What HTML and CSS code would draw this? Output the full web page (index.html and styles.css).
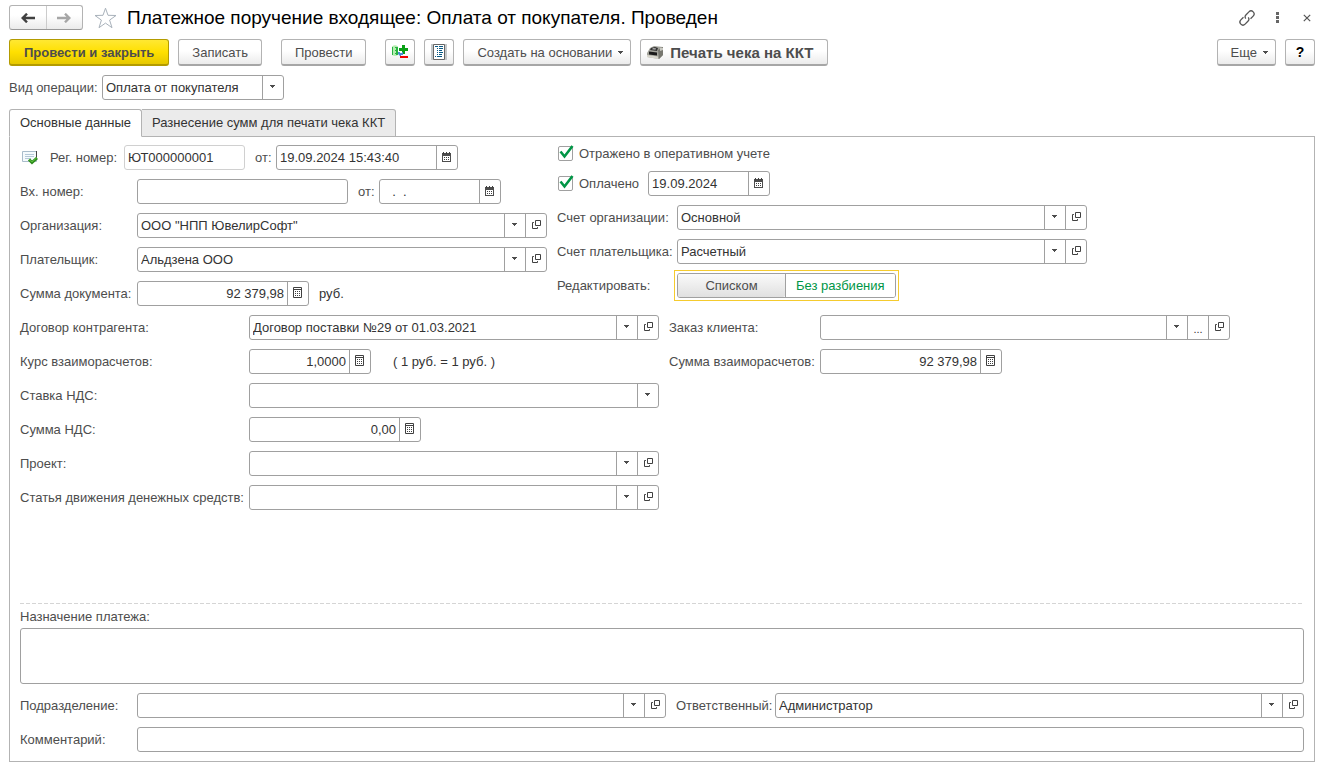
FILE: index.html
```
<!DOCTYPE html>
<html lang="ru">
<head>
<meta charset="utf-8">
<title>Платежное поручение входящее</title>
<link rel="stylesheet" href="styles.css">
</head>
<body>
<svg class="sprite" aria-hidden="true">
  <symbol id="caret" viewBox="0 0 7 4"><path d="M1 0h5v1H1zM2 1h3v1H2zM3 2h1v1H3z" fill="#4d4d4d"/></symbol>
  <symbol id="open" viewBox="0 0 9 9"><path d="M3.500.500h5v5h-5zM1.900 2.500H.500v6h5V7.100" fill="none" stroke="#404040"/></symbol>
  <symbol id="calendar" viewBox="0 0 9 10"><path d="M0 1h9v9H0z" fill="#4d4d4d"/><path d="M1 4h7v5H1z" fill="#fff"/><path d="M1 0h1v2H1zM4 0h1v2H4zM7 0h1v2H7z" fill="#404040"/><path d="M2 5h1v1H2zM4 5h1v1H4zM6 5h1v1H6zM2 7h1v1H2zM4 7h1v1H4zM6 7h1v1H6z" fill="#404040"/></symbol>
  <symbol id="calc" viewBox="0 0 9 11"><path d="M.500.500h8v10h-8zM0 2.500h9" fill="none" stroke="#404040"/><path d="M2 4h1v1H2zM4 4h1v1H4zM6 4h1v1H6zM2 6h1v1H2zM4 6h1v1H4zM6 6h1v1H6zM2 8h1v1H2zM4 8h1v1H4zM6 8h1v1H6z" fill="#404040"/></symbol>
  <symbol id="tick" viewBox="0 0 18 17"><path d="M2.500 6.500l4 5L14.500 1" fill="none" stroke="#009646" stroke-width="2.600"/></symbol>
</svg>

<div class="page">
  <header class="header">
    <div class="history">
      <button type="button" aria-label="Назад"><svg width="14" height="10" viewBox="0 0 14 10"><path d="M2 5h12M6 .700L1.700 5 6 9.300" fill="none" stroke="#404040" stroke-width="2.400"/></svg></button>
      <button type="button" aria-label="Вперед"><svg width="14" height="10" viewBox="0 0 14 10"><path d="M0 5h12M8 .700L12.300 5 8 9.300" fill="none" stroke="#a6a6a6" stroke-width="2.400"/></svg></button>
    </div>
    <button type="button" class="plain star" aria-label="Избранное"><svg width="23" height="22" viewBox="0 0 23 22"><path d="M11.500 1.200l2.500 7.100 8 .2-6.400 4.600 2.400 7.600-6.500-4.600L5 20.700l2.400-7.600L1 8.500l8-.2z" fill="#fff" stroke="#a9b2bb"/></svg></button>
    <h1>Платежное поручение входящее: Оплата от покупателя. Проведен</h1>
    <div class="window-tools">
      <button type="button" class="plain" aria-label="Ссылка"><svg width="16" height="16" viewBox="0 0 16 16"><g fill="none" stroke="#555" stroke-width="1.300" transform="rotate(-45 8 8)"><path d="M6 5H2.300a3 3 0 0 0 0 6h4a3 3 0 0 0 3-2.500M10 11h3.700a3 3 0 0 0 0-6h-4a3 3 0 0 0-3 2.500"/></g></svg></button>
      <button type="button" class="plain dots" aria-label="Меню"><svg width="3" height="11" viewBox="0 0 3 11"><path d="M0 0h3v3H0zM0 4h3v3H0zM0 8h3v3H0z" fill="#666"/></svg></button>
      <button type="button" class="plain" aria-label="Закрыть"><svg width="8" height="8" viewBox="0 0 8 8"><path d="M.800.800l6.400 6.400M7.200.800L.800 7.200" stroke="#555" stroke-width="1.200"/></svg></button>
    </div>
  </header>

  <div class="toolbar">
    <button type="button" class="btn primary">Провести и закрыть</button>
    <button type="button" class="btn">Записать</button>
    <button type="button" class="btn apart">Провести</button>
    <button type="button" class="btn icon apart" aria-label="Движения"><svg width="16" height="16" viewBox="0 0 16 16"><path d="M0 2.500Q3 0 6 2.500V11Q3 13 0 11z" fill="#b5ecb0"/><path d="M0 3h1v8H0zM3 3h3v1H3zM3 6h3v1H3zM3 9h3v1H3zM4 3h2v8H4z" fill="#27b341"/><path d="M10 1h3v3h3v3h-3v3h-3V7H7V4h3z" fill="#09a015"/><path d="M6 8h2v1h2V8h1v3H9v2L6 10z" fill="#4a8cd0"/><path d="M8 12h8v2H8z" fill="#f20000"/></svg></button>
    <button type="button" class="btn icon" aria-label="Отчет"><svg width="16" height="16" viewBox="0 0 16 16"><path d="M0 0h16v16H0z" fill="#c4c9cb"/><path d="M2.500.500h11v15h-11z" fill="#fff" stroke="#666"/><path d="M4 2h3v1H4zM8 2h4v1H8zM6 4h1v1H6zM8 4h4v1H8zM6 6h1v1H6zM8 6h3v1H8zM6 8h1v1H6zM8 8h4v1H8zM6 10h1v1H6zM8 10h3v1H8zM4 12h1v1H4zM6 12h5v1H6z" fill="#075985"/></svg></button>
    <button type="button" class="btn menu">Создать на основании<svg width="7" height="4"><use href="#caret"/></svg></button>
    <button type="button" class="btn print"><svg width="17" height="14" viewBox="0 0 17 14"><path d="M3 2l4-2 9 1v8l-4 4-12-2V7z" fill="#a3a39b"/><path d="M4 2l4-1 3 1-1 3-7-1z" fill="#333"/><path d="M6 2l3 .3-.5 1.500L5 3.300z" fill="#aaa"/><path d="M11 4l5-3v8l-4 4z" fill="#77776f"/><path d="M13 2l3 0v2l-3 1z" fill="#c9c9c2"/><path d="M2 5.500l8 1v3l-8-1z" fill="#1a1a1a"/><path d="M0 9l11 1.500V13L0 11z" fill="#d8d6cc"/></svg>Печать чека на ККТ</button>
    <button type="button" class="btn menu more">Еще<svg width="7" height="4"><use href="#caret"/></svg></button>
    <button type="button" class="btn icon help">?</button>
  </div>

  <div class="line operation">
    <label for="operation">Вид операции:</label>
    <div class="combo w182"><select id="operation"><option>Оплата от покупателя</option></select><span class="arrow"><svg width="7" height="4"><use href="#caret"/></svg></span></div>
  </div>

  <div class="tabs" role="tablist">
    <button type="button" role="tab" aria-selected="true" class="tab active">Основные данные</button>
    <button type="button" role="tab" aria-selected="false" class="tab">Разнесение сумм для печати чека ККТ</button>
  </div>

  <main class="panel">
    <div class="columns">
      <div class="rows">
        <div class="line">
          <svg class="status" width="16" height="14" viewBox="0 0 16 14"><path d="M.500.500h14v10H.500z" fill="#f5fafd" stroke="#a9bccb"/><path d="M14.500 0v8" stroke="#444"/><path d="M3 3.500h9M3 5.500h9M3 7.500h6" stroke="#b5c8d8"/><path d="M7 8.500l3 3 5-4.500" fill="none" stroke="#2c8a1b" stroke-width="3"/><path d="M7 8.500l3 2.500L15 6.500" fill="none" stroke="#5cc43c"/></svg>
          <label class="l-reg" for="reg">Рег. номер:</label>
          <div class="field readonly w121"><input id="reg" value="ЮТ000000001" readonly></div>
          <label class="l-from" for="reg-date">от:</label>
          <div class="field w182"><input id="reg-date" value="19.09.2024 15:43:40"><button type="button" aria-label="Календарь"><svg width="9" height="10"><use href="#calendar"/></svg></button></div>
        </div>
        <div class="line">
          <label class="l-main" for="inc">Вх. номер:</label>
          <div class="field w211"><input id="inc"></div>
          <label class="l-from" for="inc-date">от:</label>
          <div class="field w122"><input id="inc-date" value="  .  ." class="blank-date"><button type="button" aria-label="Календарь"><svg width="9" height="10"><use href="#calendar"/></svg></button></div>
        </div>
        <div class="line">
          <label class="l-main" for="org">Организация:</label>
          <div class="combo w410"><select id="org"><option>ООО "НПП ЮвелирСофт"</option></select><span class="arrow"><svg width="7" height="4"><use href="#caret"/></svg></span><button type="button" aria-label="Открыть"><svg width="9" height="9"><use href="#open"/></svg></button></div>
        </div>
        <div class="line">
          <label class="l-main" for="payer">Плательщик:</label>
          <div class="combo w410"><select id="payer"><option>Альдзена ООО</option></select><span class="arrow"><svg width="7" height="4"><use href="#caret"/></svg></span><button type="button" aria-label="Открыть"><svg width="9" height="9"><use href="#open"/></svg></button></div>
        </div>
        <div class="line">
          <label class="l-main" for="sum">Сумма документа:</label>
          <div class="field num w172"><input id="sum" value="92 379,98"><button type="button" aria-label="Калькулятор"><svg width="9" height="11"><use href="#calc"/></svg></button></div>
          <span class="unit">руб.</span>
        </div>
      </div>

      <div class="rows">
        <label class="check"><input type="checkbox" checked><svg width="18" height="17"><use href="#tick"/></svg><span>Отражено в оперативном учете</span></label>
        <div class="line">
          <label class="check"><input type="checkbox" checked><svg width="18" height="17"><use href="#tick"/></svg><span>Оплачено</span></label>
          <div class="field paid w122"><input aria-label="Дата оплаты" value="19.09.2024"><button type="button" aria-label="Календарь"><svg width="9" height="10"><use href="#calendar"/></svg></button></div>
        </div>
        <div class="line">
          <label class="l-side" for="acc">Счет организации:</label>
          <div class="combo w410"><select id="acc"><option>Основной</option></select><span class="arrow"><svg width="7" height="4"><use href="#caret"/></svg></span><button type="button" aria-label="Открыть"><svg width="9" height="9"><use href="#open"/></svg></button></div>
        </div>
        <div class="line">
          <label class="l-side" for="pacc">Счет плательщика:</label>
          <div class="combo w410"><select id="pacc"><option>Расчетный</option></select><span class="arrow"><svg width="7" height="4"><use href="#caret"/></svg></span><button type="button" aria-label="Открыть"><svg width="9" height="9"><use href="#open"/></svg></button></div>
        </div>
        <div class="line">
          <span class="l-side">Редактировать:</span>
          <div class="focus"><div class="switch" role="group" aria-label="Редактировать"><button type="button">Списком</button><button type="button" class="on" aria-pressed="true">Без разбиения</button></div></div>
        </div>
      </div>
    </div>

    <div class="columns details">
      <div class="rows">
        <div class="line">
          <label class="l-wide" for="contract">Договор контрагента:</label>
          <div class="combo w410"><select id="contract"><option>Договор поставки №29 от 01.03.2021</option></select><span class="arrow"><svg width="7" height="4"><use href="#caret"/></svg></span><button type="button" aria-label="Открыть"><svg width="9" height="9"><use href="#open"/></svg></button></div>
        </div>
        <div class="line">
          <label class="l-wide" for="rate">Курс взаиморасчетов:</label>
          <div class="field num w122"><input id="rate" value="1,0000"><button type="button" aria-label="Калькулятор"><svg width="9" height="11"><use href="#calc"/></svg></button></div>
          <span class="ratio">( 1 руб. = 1 руб. )</span>
        </div>
        <div class="line">
          <label class="l-wide" for="vat">Ставка НДС:</label>
          <div class="combo w410"><select id="vat"><option></option></select><span class="arrow"><svg width="7" height="4"><use href="#caret"/></svg></span></div>
        </div>
        <div class="line">
          <label class="l-wide" for="vatsum">Сумма НДС:</label>
          <div class="field num w172"><input id="vatsum" value="0,00"><button type="button" aria-label="Калькулятор"><svg width="9" height="11"><use href="#calc"/></svg></button></div>
        </div>
        <div class="line">
          <label class="l-wide" for="project">Проект:</label>
          <div class="combo w410"><select id="project"><option></option></select><span class="arrow"><svg width="7" height="4"><use href="#caret"/></svg></span><button type="button" aria-label="Открыть"><svg width="9" height="9"><use href="#open"/></svg></button></div>
        </div>
        <div class="line">
          <label class="l-wide" for="cash">Статья движения денежных средств:</label>
          <div class="combo w410"><select id="cash"><option></option></select><span class="arrow"><svg width="7" height="4"><use href="#caret"/></svg></span><button type="button" aria-label="Открыть"><svg width="9" height="9"><use href="#open"/></svg></button></div>
        </div>
      </div>
      <div class="rows">
        <div class="line">
          <label class="l-order" for="order">Заказ клиента:</label>
          <div class="combo w410"><select id="order"><option></option></select><span class="arrow"><svg width="7" height="4"><use href="#caret"/></svg></span><button type="button" class="choose" aria-label="Выбрать">...</button><button type="button" aria-label="Открыть"><svg width="9" height="9"><use href="#open"/></svg></button></div>
        </div>
        <div class="line">
          <label class="l-order" for="settle">Сумма взаиморасчетов:</label>
          <div class="field num w182"><input id="settle" value="92 379,98"><button type="button" aria-label="Калькулятор"><svg width="9" height="11"><use href="#calc"/></svg></button></div>
        </div>
      </div>
    </div>

    <div class="bottom">
      <label class="purpose" for="purpose">Назначение платежа:</label>
      <textarea id="purpose"></textarea>
      <div class="rows">
        <div class="line pair">
          <div class="line">
            <label class="l-main" for="dept">Подразделение:</label>
            <div class="combo grow"><select id="dept"><option></option></select><span class="arrow"><svg width="7" height="4"><use href="#caret"/></svg></span><button type="button" aria-label="Открыть"><svg width="9" height="9"><use href="#open"/></svg></button></div>
          </div>
          <div class="line">
            <label class="l-resp" for="resp">Ответственный:</label>
            <div class="combo grow"><select id="resp"><option>Администратор</option></select><span class="arrow"><svg width="7" height="4"><use href="#caret"/></svg></span><button type="button" aria-label="Открыть"><svg width="9" height="9"><use href="#open"/></svg></button></div>
          </div>
        </div>
        <div class="line">
          <label class="l-main" for="comment">Комментарий:</label>
          <div class="field grow"><input id="comment"></div>
        </div>
      </div>
    </div>
  </main>
</div>
</body>
</html>
```

FILE: styles.css
```
* { box-sizing: border-box; }

body {
  margin: 0;
  background: #fff;
  color: #4d4d4d;
  font: 13px/16px "Liberation Sans", Arial, sans-serif;
}

button, input, select, textarea { font: inherit; color: #333; margin: 0; padding: 0; }
svg { display: block; flex: none; }
.sprite { display: none; }

.page {
  display: flex;
  flex-direction: column;
  min-height: 100vh;
  padding: 5px 4px 5px 9px;
}

/* Window header */
.header { display: flex; align-items: center; height: 25px; }
.history {
  display: flex;
  width: 74px;
  height: 25px;
  border: 1px solid #b3b3b3;
  border-bottom-color: #999;
  border-radius: 3px;
  background: linear-gradient(#fff 40%, #ebebeb);
}
.history button {
  flex: 1;
  display: grid;
  place-items: center;
  border: 0;
  background: none;
}
.history button + button { border-left: 1px solid #ccc; }
.plain { display: grid; place-items: center; border: 0; background: none; }
.star { margin: 0 10px 0 11px; }
h1 { margin: 0; font-size: 19px; line-height: 24px; font-weight: 400; color: #000; white-space: nowrap; }
.window-tools { display: flex; align-items: center; gap: 21px; margin-left: auto; padding-right: 4px; }
.dots { margin-right: 3px; }

/* Command bar */
.toolbar { display: flex; gap: 9px; margin-top: 9px; }
.btn {
  display: flex;
  align-items: center;
  justify-content: center;
  height: 27px;
  padding: 1px 13px 0;
  border: 1px solid #b3b3b3;
  border-bottom: 2px solid #a6a6a6;
  border-radius: 3px;
  background: linear-gradient(#fff 45%, #ebebeb);
  color: #4d4d4d;
  white-space: nowrap;
}
.btn.primary {
  padding: 1px 14px 0;
  border-color: #b39b00;
  background: linear-gradient(#ffe833, #ffe000 50%, #e6c800);
  font-weight: 700;
}
.apart { margin-left: 10px; }
.btn.icon { width: 30px; padding: 0; }
.btn.menu { gap: 5px; padding-right: 6px; }
.btn.print { gap: 6px; padding: 1px 14px 0 6px; font-size: 15px; font-weight: 700; }
.more { margin-left: auto; }
.help { color: #000; font-weight: 700; font-size: 14px; }

/* Fields */
.line { display: flex; align-items: center; }
.operation { margin-top: 9px; }
.operation label { width: 93px; }
.field, .combo {
  height: 25px;
  border: 1px solid #a0a0a0;
  border-radius: 3px;
  background: #fff;
  overflow: hidden;
}
.field { display: flex; }
.combo {
  display: grid;
  grid-template-columns: 1fr 21px;
  grid-auto-columns: 21px;
  grid-auto-flow: column;
}
.field input, .combo select {
  min-width: 0;
  width: 100%;
  border: 0;
  outline: 0;
  background: none;
  padding: 0 3px;
}
.field input { flex: 1; }
.num input { text-align: right; }
.field .blank-date { padding-left: 5px; white-space: pre; }
.combo select { appearance: none; grid-column: 1 / 3; grid-row: 1; height: 23px; }
.arrow { grid-column: 2; grid-row: 1; pointer-events: none; }
.arrow, .field button, .combo button {
  display: grid;
  place-items: center;
  width: 21px;
  border: 0;
  border-left: 1px solid #a0a0a0;
  background: none;
  padding: 0 1px 2px 0;
}
.combo button { padding: 0 0 2px 1px; }
.combo .choose { padding: 2px 0 0; font-size: 11px; }
.readonly { border-color: #d0d0d0; }
.w121 { width: 121px; }
.w122 { width: 122px; }
.w172 { width: 172px; }
.w182 { width: 182px; }
.w211 { width: 211px; }
.w410 { width: 410px; }
.grow { flex: 1; }

.line > label, .l-side { flex: none; white-space: nowrap; }
.l-main { width: 117px; }
.l-side { width: 120px; }
.l-wide { width: 229px; }
.l-order { width: 151px; }
.l-resp { width: 99px; }
.l-reg { width: 74px; }
.l-from { width: 31px; padding-left: 10px; }
.status { margin: 0 12px 0 2px; }
.unit { margin-left: 10px; color: #333; }
.ratio { margin-left: 22px; color: #333; }

/* Tabs */
.tabs { display: flex; position: relative; margin-top: 9px; }
.tab {
  height: 28px;
  padding: 0 10px;
  border: 1px solid #b3b3b3;
  border-left: 0;
  background: #ebebeb;
  border-radius: 0 3px 0 0;
}
.tab.active {
  border-left: 1px solid #b3b3b3;
  border-bottom-color: #fff;
  border-radius: 3px 3px 0 0;
  background: #fff;
}

.panel {
  flex: 1;
  display: flex;
  flex-direction: column;
  margin-top: -1px;
  padding: 8px 10px 9px;
  border: 1px solid #b3b3b3;
}
.columns { display: flex; gap: 10px; }
.details { margin-top: 9px; }
.rows { display: flex; flex-direction: column; gap: 9px; }

/* Check boxes: the tick is laid over the box */
.check {
  display: grid;
  grid-template-columns: 22px auto;
  align-items: center;
  height: 17px;
}
.check input {
  appearance: none;
  grid-area: 1 / 1;
  width: 15px;
  height: 15px;
  margin-left: 1px;
  border: 1px solid #a0a0a0;
  border-radius: 2px;
}
.check svg { grid-area: 1 / 1; visibility: hidden; pointer-events: none; margin-left: 1px; }
.check input:checked + svg { visibility: visible; }
.paid { margin-left: 9px; }

/* Two-way switch with its focus frame */
.focus { margin: -3px; padding: 2px; border: 1px solid #f5cb2e; }
.switch {
  display: flex;
  height: 25px;
  border: 1px solid #a0a0a0;
  border-radius: 3px;
}
.switch button {
  min-width: 107px;
  padding: 0 10px;
  border: 0;
  border-radius: 2px;
  background: linear-gradient(#fafafa, #e0e0e0);
  color: #4d4d4d;
}
.switch .on { border-left: 1px solid #a0a0a0; border-radius: 0 2px 2px 0; background: #fff; color: #009646; }

/* Bottom block */
.bottom { display: flex; flex-direction: column; margin-top: auto; }
.bottom::before {
  content: "";
  height: 1px;
  background: repeating-linear-gradient(90deg, #d5d5d5 0 4px, transparent 4px 6px);
}
.purpose { padding: 5px 0 3px; }
textarea {
  width: 100%;
  height: 56px;
  margin-bottom: 9px;
  padding: 3px;
  border: 1px solid #a0a0a0;
  border-radius: 3px;
  resize: none;
}
.pair { gap: 10px; }
.pair > .line:first-child { flex: 646 1 0; }
.pair > .line:last-child { flex: 628 1 0; }
```
